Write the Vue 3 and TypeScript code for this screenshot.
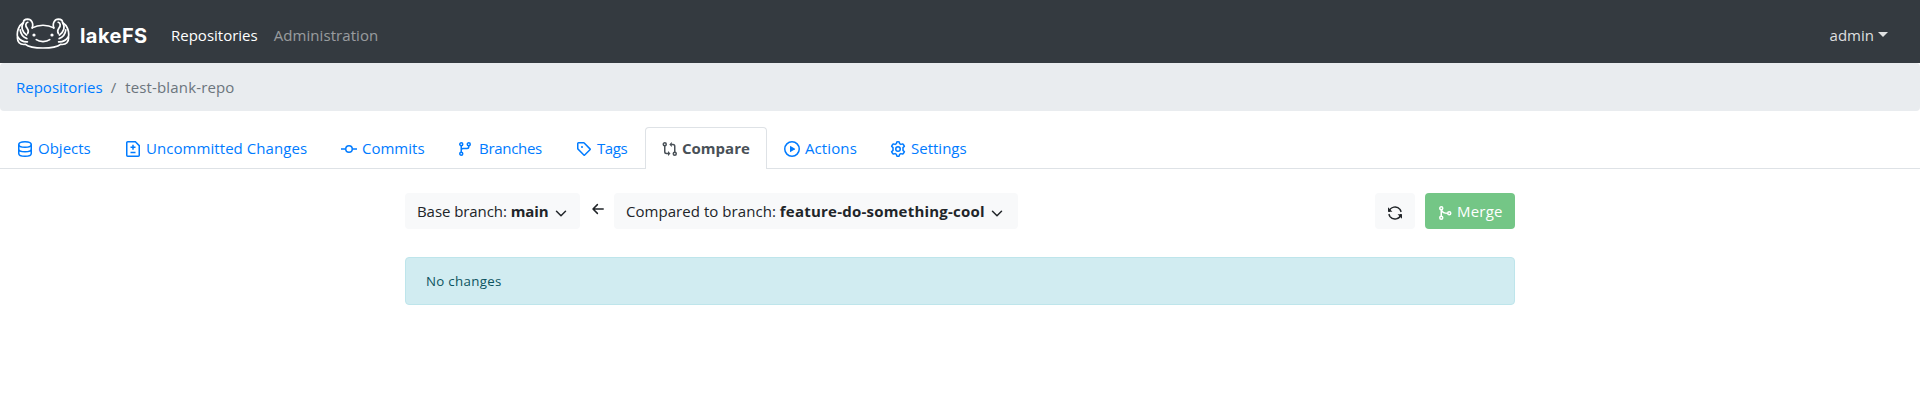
<script setup lang="ts">
interface Tab {
  id: string
  label: string
  active?: boolean
}

const tabs: Tab[] = [
  { id: 'objects', label: 'Objects' },
  { id: 'changes', label: 'Uncommitted Changes' },
  { id: 'commits', label: 'Commits' },
  { id: 'branches', label: 'Branches' },
  { id: 'tags', label: 'Tags' },
  { id: 'compare', label: 'Compare', active: true },
  { id: 'actions', label: 'Actions' },
  { id: 'settings', label: 'Settings' },
]

const baseBranch = 'main'
const compareBranch = 'feature-do-something-cool'
</script>

<template>
  <div class="page">
    <header class="navbar">
      <a class="brand">
        <svg class="mascot" viewBox="0 0 54 32" width="54" height="31" preserveAspectRatio="none">
          <g fill="none" stroke="#fff" stroke-width="1.7" stroke-linecap="round" stroke-linejoin="round">
            <path d="M16.2 10.2C22.5 6.6 31.5 6.6 37.8 10.2" />
            <path d="M16.2 10.2C17.8 5.5 15.5 1.3 11.6 1.2C9.2 1.2 7.5 2.6 7.4 4.6C2.8 7.6 .6 13.8 1.5 19.2C1 24.6 3.6 28 9.4 27.2C12.8 30 19.5 31 27 31C34.5 31 41.2 30 44.6 27.2C50.4 28 53 24.6 52.5 19.2C53.4 13.8 51.2 7.6 46.6 4.6C46.5 2.6 44.8 1.2 42.4 1.2C38.5 1.3 36.2 5.5 37.8 10.2" />
            <path d="M11.8 4.4C9.4 5 9.2 8 11 10.2C12.7 12.4 12.7 14.2 11.6 16.2" />
            <path d="M42.2 4.4C44.6 5 44.8 8 43 10.2C41.3 12.4 41.3 14.2 42.4 16.2" />
            <path d="M7.4 4.8C4.8 9.2 5.6 13.6 10.6 17.6M4.2 12.2C4.6 16.6 6.8 19.4 10.8 21.2M1.8 19.6C4.2 23.4 7.6 24.8 11.4 24.6" />
            <path d="M46.6 4.8C49.2 9.2 48.4 13.6 43.4 17.6M49.8 12.2C49.4 16.6 47.2 19.4 43.2 21.2M52.2 19.6C49.8 23.4 46.4 24.8 42.6 24.6" />
            <path d="M20.3 22.3C23.7 25 30.3 25 33.7 22.3" />
          </g>
          <circle cx="18" cy="17.5" r="1.6" fill="#fff" />
          <circle cx="36" cy="17.5" r="1.6" fill="#fff" />
        </svg>
        <span class="wordmark">lakeFS</span>
      </a>
      <a class="nav-item current">Repositories</a>
      <a class="nav-item administration">Administration</a>
      <a class="user">admin<i class="caret"></i></a>
    </header>

    <nav class="breadcrumb">
      <a>Repositories</a><span class="slash">/</span><span class="repo">test-blank-repo</span>
    </nav>

    <nav class="tabs">
      <a v-for="tab in tabs" :key="tab.id" class="tab" :class="[tab.id, { active: tab.active }]">
        <svg class="icon" viewBox="0 0 16 16" width="16" height="16" fill="none" stroke="currentColor" stroke-width="1.5">
          <template v-if="tab.id === 'objects'">
            <ellipse cx="8" cy="3.5" rx="6.25" ry="2.75" />
            <path d="M1.75 3.5v9c0 1.5 2.8 2.75 6.25 2.75s6.25-1.25 6.25-2.75v-9M1.75 8c0 1.5 2.8 2.75 6.25 2.75S14.25 9.5 14.25 8" />
          </template>
          <template v-else-if="tab.id === 'changes'">
            <path d="M2.75.75h7.6l3.9 3.9v9.6a1 1 0 0 1-1 1H2.75a1 1 0 0 1-1-1V1.75a1 1 0 0 1 1-1zM8 3.8v5M5.5 6.3h5M5.5 11.5h5" />
          </template>
          <template v-else-if="tab.id === 'commits'">
            <circle cx="8" cy="8" r="3.25" />
            <path d="M0 8h4.5M11.5 8H16" />
          </template>
          <template v-else-if="tab.id === 'branches'">
            <circle cx="3.25" cy="3.25" r="1.5" />
            <circle cx="3.25" cy="12.75" r="1.5" />
            <circle cx="10.75" cy="3.25" r="1.5" />
            <path d="M3.25 4.75v6.5M10.75 4.75v1c0 1-.8 1.75-1.75 1.75H5C4 7.5 3.25 8.3 3.25 9.25" />
          </template>
          <template v-else-if="tab.id === 'tags'">
            <path d="M1.75 2.5h0v5.25c0 .1 0 .15.1.2l6.25 6.25a.25.25 0 0 0 .35 0l5.75-5.75a.25.25 0 0 0 0-.35L7.95 1.85a.25.25 0 0 0-.2-.1H2.5a.75.75 0 0 0-.75.75z" />
            <circle cx="6" cy="6" r="1" fill="currentColor" stroke="none" />
          </template>
          <template v-else-if="tab.id === 'compare'">
            <circle cx="2.75" cy="3.25" r="1.5" />
            <circle cx="12.75" cy="12.75" r="1.5" />
            <path d="M2.75 4.75v6c0 1 .8 1.75 1.75 1.75H6.5M12.75 11.25v-6c0-1-.8-1.75-1.75-1.75H9.3" />
            <path d="M6 10l2.5 2.5L6 15zM9.8 1L7.3 3.5 9.8 6z" fill="currentColor" stroke="none" />
          </template>
          <template v-else-if="tab.id === 'actions'">
            <circle cx="8" cy="8" r="7.25" />
            <path d="M6 5.2v5.6a.3.3 0 0 0 .45.25L11 8.25a.3.3 0 0 0 0-.5L6.45 4.95A.3.3 0 0 0 6 5.2z" fill="currentColor" stroke="none" />
          </template>
          <template v-else>
            <path d="M6.8.95Q8 .6 9.2.95L9.6 2.7 10.9 3.4 12.7 2.9Q13.8 3.8 14.4 5.2L13 6.6V9.4L14.4 10.8Q13.8 12.2 12.7 13.1L10.9 12.6 9.6 13.3 9.2 15.05Q8 15.4 6.8 15.05L6.4 13.3 5.1 12.6 3.3 13.1Q2.2 12.2 1.6 10.8L3 9.4V6.6L1.6 5.2Q2.2 3.8 3.3 2.9L5.1 3.4 6.4 2.7z" stroke-linejoin="round" />
            <circle cx="8" cy="8" r="2.25" />
          </template>
        </svg>
        <span>{{ tab.label }}</span>
      </a>
    </nav>

    <main class="content">
      <div class="toolbar">
        <button class="btn base">
          <span>Base branch: <b>{{ baseBranch }}</b></span>
          <svg class="chevron" viewBox="0 0 16 16" width="16" height="16"><path d="M3.5 6.2 8 10.7l4.5-4.5" /></svg>
        </button>
        <svg class="arrow" viewBox="0 0 16 16" width="16" height="16"><path d="M13.2 8H3.5M7.4 3.6 3 8l4.4 4.4" /></svg>
        <button class="btn compared">
          <span>Compared to branch: <b>{{ compareBranch }}</b></span>
          <svg class="chevron" viewBox="0 0 16 16" width="16" height="16"><path d="M3.5 6.2 8 10.7l4.5-4.5" /></svg>
        </button>
        <button class="btn refresh">
          <svg viewBox="0 0 16 16" width="16" height="16">
            <path d="M2 6.7A6.25 6.25 0 0 1 13 4.4L14.2 6.8M14 9.3A6.25 6.25 0 0 1 3 11.6L1.8 9.2" fill="none" stroke="currentColor" stroke-width="1.5" />
            <path d="M1 2.2v4.2c0 .2.1.35.35.35H5.4zM15 13.8V9.6c0-.2-.1-.35-.35-.35H10.6z" fill="currentColor" />
          </svg>
        </button>
        <button class="btn merge">
          <svg viewBox="0 0 16 16" width="16" height="16" fill="none" stroke="currentColor" stroke-width="1.5">
            <circle cx="4.25" cy="3.25" r="1.5" />
            <circle cx="4.25" cy="12.75" r="1.5" />
            <circle cx="12.25" cy="8.25" r="1.5" />
            <path d="M4.25 4.75v6.5M4.4 4.9C5.2 7 7.3 8.25 10.75 8.25" />
          </svg>
          <span>Merge</span>
        </button>
      </div>
      <div class="alert">No changes</div>
    </main>
  </div>
</template>

<style>
body {
  background: #fff;
}
</style>

<style scoped>
.page {
  font-family: "Open Sans", "Noto Sans", sans-serif;
  font-size: 15px;
  line-height: 24px;
  color: #212529;
}
svg {
  flex: none;
}
.navbar {
  box-sizing: border-box;
  height: 63px;
  display: flex;
  align-items: center;
  padding: 7px 32px 0 16px;
  background: #343a40;
  color: rgba(255, 255, 255, 0.5);
}
.brand {
  display: flex;
  align-items: center;
  width: 155px;
  color: #fff;
}
.mascot {
  margin-top: -4px;
}
.wordmark {
  margin: 2px 0 0 10px;
  font: 700 20px/24px Inter, sans-serif;
  letter-spacing: 0.45px;
}
.nav-item {
  margin-right: 16px;
}
.current {
  color: #fff;
}
.administration {
  letter-spacing: 0.07px;
}
.user {
  display: flex;
  align-items: center;
  margin-left: auto;
  color: rgba(255, 255, 255, 0.85);
}
.caret {
  margin: -1px 0 0 4px;
  border: 5px solid transparent;
  border-top-color: currentColor;
  border-bottom: 0;
}
.breadcrumb {
  display: flex;
  padding: 12px 16px;
  margin-bottom: 16px;
  border-radius: 4px;
  background: #e9ecef;
  color: #6c757d;
}
.breadcrumb a {
  color: #007bff;
}
.slash {
  margin: 0 9px 0 8px;
}
.repo {
  letter-spacing: 0.15px;
}
.tabs {
  display: flex;
  height: 41px;
  border-bottom: 1px solid #dee2e6;
}
.tab {
  box-sizing: border-box;
  display: flex;
  height: 42px;
  padding: 8px 0 0 16px;
  border: 1px solid transparent;
  border-bottom: 0;
  border-radius: 4px 4px 0 0;
  color: #007bff;
  white-space: nowrap;
}
.tab.active {
  background: #fff;
  border-color: #dee2e6;
  color: #495057;
  font-weight: 700;
}
.icon {
  margin: 5px 5px 0 0;
}
.compare .icon {
  margin-right: 4px;
}
.objects { width: 108px; }
.changes { width: 216px; letter-spacing: 0.06px; }
.commits { width: 117px; }
.branches { width: 118px; letter-spacing: -0.3px; }
.tags { width: 86px; letter-spacing: -0.4px; }
.compare { width: 122px; }
.actions { width: 106px; letter-spacing: 0.1px; }
.settings { width: 112px; }
.content {
  width: 1110px;
  margin: 24px auto 0;
}
.toolbar {
  display: flex;
  height: 36px;
}
.btn {
  box-sizing: border-box;
  display: flex;
  align-items: center;
  height: 36px;
  margin: 0;
  padding: 0 0 0 12px;
  border: 0;
  border-radius: 4px;
  background: #f8f9fa;
  color: #212529;
  font: inherit;
  white-space: nowrap;
}
.base {
  width: 175px;
  letter-spacing: -0.07px;
}
.compared {
  width: 404px;
  letter-spacing: 0.05px;
}
.compared b { letter-spacing: 0.22px; }
.chevron {
  margin: 4px 0 0 4px;
}
.chevron path,
.arrow path {
  fill: none;
  stroke: #212529;
  stroke-width: 1.5;
  stroke-linecap: round;
  stroke-linejoin: round;
}
.arrow {
  margin: 8px 8px 0 10px;
}
.refresh {
  width: 40px;
  margin: 0 10px 0 auto;
}
.refresh svg {
  margin-top: 4px;
}
.merge {
  width: 90px;
  gap: 4px;
  background: #74c686;
  color: #fff;
  letter-spacing: 0.2px;
}
.merge svg {
  margin-top: 4px;
}
.alert {
  box-sizing: border-box;
  height: 48px;
  margin-top: 28px;
  padding: 11px 20px;
  border: 1px solid #bee5eb;
  border-radius: 4px;
  background: #d1ecf1;
  color: #0c5460;
  font-size: 13.3px;
  letter-spacing: 0.3px;
}
</style>
